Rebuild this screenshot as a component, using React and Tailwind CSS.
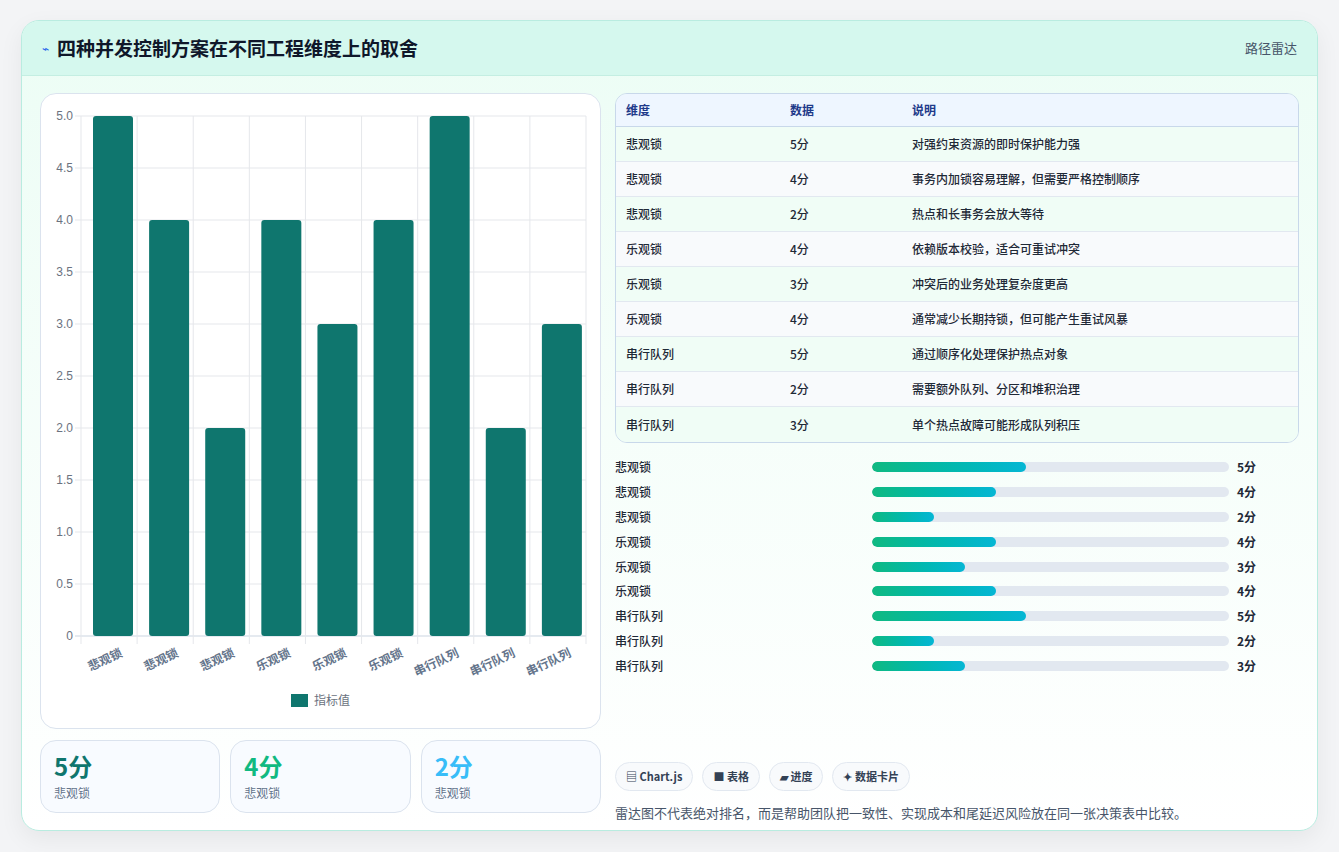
import React from "react";

const rows = [
  ["悲观锁", 5, "对强约束资源的即时保护能力强"],
  ["悲观锁", 4, "事务内加锁容易理解，但需要严格控制顺序"],
  ["悲观锁", 2, "热点和长事务会放大等待"],
  ["乐观锁", 4, "依赖版本校验，适合可重试冲突"],
  ["乐观锁", 3, "冲突后的业务处理复杂度更高"],
  ["乐观锁", 4, "通常减少长期持锁，但可能产生重试风暴"],
  ["串行队列", 5, "通过顺序化处理保护热点对象"],
  ["串行队列", 2, "需要额外队列、分区和堆积治理"],
  ["串行队列", 3, "单个热点故障可能形成队列积压"],
];

function Chart() {
  const L = 40, R = 545, T = 22, B = 542;
  const cw = (R - L) / 9;
  const ticks = [0, 0.5, 1, 1.5, 2, 2.5, 3, 3.5, 4, 4.5, 5];
  const y = (v) => B - (v / 5) * (B - T);
  return (
    <svg width="560" height="634" className="block">
      {ticks.map((t) => (
        <g key={t}>
          <line x1={L - 6} x2={R} y1={y(t)} y2={y(t)} stroke={t === 0 ? "#cbd5e1" : "#e5e7eb"} strokeWidth="1" />
          <text x={L - 8} y={y(t) + 4} textAnchor="end" fontSize="12" fill="#6b7280" fontFamily="Liberation Sans, sans-serif">
            {t === 0 ? "0" : t.toFixed(1)}
          </text>
        </g>
      ))}
      {Array.from({ length: 10 }).map((_, i) => (
        <line key={i} x1={L + i * cw} x2={L + i * cw} y1={T} y2={B + 8} stroke="#e5e7eb" />
      ))}
      {rows.map((r, i) => (
        <g key={i}>
          <rect x={L + i * cw + 12} y={y(r[1])} width="40" height={B - y(r[1])} rx="3" fill="#0f766e" />
          <text
            transform={`translate(${L + i * cw + cw / 2 + 14} ${B + 20}) rotate(-25)`}
            textAnchor="end"
            fontSize="12"
            fontWeight="700"
            fill="#64748b"
            fontFamily="Noto Sans CJK SC, sans-serif"
          >
            {r[0]}
          </text>
        </g>
      ))}
      <rect x="250" y="600" width="17" height="13" fill="#0f766e" />
      <text x="273" y="611" fontSize="12" fill="#6b7280" fontFamily="Noto Sans CJK SC, sans-serif">指标值</text>
    </svg>
  );
}

export default function App() {
  return (
    <div className="min-h-[852px] bg-[#f3f4f6] pt-5 px-[21px]" style={{ fontFamily: "'Noto Sans CJK SC', 'Noto Sans', sans-serif" }}>
      <div className="w-[1297px] h-[811px] rounded-[18px] border border-[#b9ece0] bg-gradient-to-b from-[#ecfdf5] to-white overflow-hidden shadow-[0_8px_24px_rgba(0,0,0,0.06)]">
        <div className="h-[55px] flex items-center justify-between px-5 bg-[#d5f8ee] border-b border-[#c4eee2]">
          <div className="flex items-center gap-2">
            <span className="text-[12px] text-[#2563eb]">⌁</span>
            <span className="text-[19px] font-bold text-[#0f172a]">四种并发控制方案在不同工程维度上的取舍</span>
          </div>
          <span className="text-[13px] text-[#475569]">路径雷达</span>
        </div>
        <div className="flex gap-[14px] px-[18px] pt-[17px]">
          <div className="w-[561px] flex flex-col gap-[11px]">
            <div className="h-[636px] rounded-2xl border border-[#dbe3ee] bg-white">
              <Chart />
            </div>
            <div className="flex gap-[10px]">
              {[["5分", "#0f766e"], ["4分", "#10b981"], ["2分", "#38bdf8"]].map(([v, c]) => (
                <div key={v} className="flex-1 h-[73px] rounded-2xl border border-[#dbe3ee] bg-[#f8fbff] px-[13px] pt-[9px]">
                  <div className="text-[24px] font-bold leading-[32px]" style={{ color: c }}>{v}</div>
                  <div className="text-[12px] text-[#64748b] mt-[2px]">悲观锁</div>
                </div>
              ))}
            </div>
          </div>
          <div className="flex-1 flex flex-col">
            <div className="rounded-xl border border-[#c8d8ea] overflow-hidden">
              <div className="h-[33px] flex items-center bg-[#eef6ff] border-b border-[#c8d8ea] text-[12px] font-bold text-[#1e3a8a] px-[10px]">
                <span className="w-[164px]">维度</span>
                <span className="w-[122px]">数据</span>
                <span>说明</span>
              </div>
              {rows.map((r, i) => (
                <div key={i} className={`h-[35px] flex items-center px-[10px] text-[12px] font-medium text-[#1f2937] ${i < 8 ? "border-b border-[#e2e8f0]" : ""} ${i % 2 ? "bg-[#f8fafc]" : "bg-[#f0fdf6]"}`}>
                  <span className="w-[164px]">{r[0]}</span>
                  <span className="w-[122px]">{r[1]}分</span>
                  <span>{r[2]}</span>
                </div>
              ))}
            </div>
            <div className="mt-[12px] flex flex-col">
              {rows.map((r, i) => (
                <div key={i} className="h-[24.8px] flex items-center text-[12px] font-medium text-[#1f2937]">
                  <span className="w-[257px]">{r[0]}</span>
                  <div className="w-[357px] h-[10px] rounded-full bg-[#e2e8f0] overflow-hidden">
                    <div className="h-full rounded-full bg-gradient-to-r from-[#10b981] to-[#06b6d4]" style={{ width: `${r[1] * 8.65}%` }} />
                  </div>
                  <span className="ml-[8px] font-bold">{r[1]}分</span>
                </div>
              ))}
            </div>
            <div className="mt-[84px] flex gap-[9px]">
              {["▤ Chart.js", "■ 表格", "▰ 进度", "✦ 数据卡片"].map((t) => (
                <span key={t} className="h-[29px] flex items-center px-[10px] rounded-full border border-[#e2e8f0] bg-[#f8fafc] text-[11px] font-bold text-[#334155]">{t}</span>
              ))}
            </div>
            <div className="mt-[12px] text-[13px] text-[#475569]">雷达图不代表绝对排名，而是帮助团队把一致性、实现成本和尾延迟风险放在同一张决策表中比较。</div>
          </div>
        </div>
      </div>
    </div>
  );
}
